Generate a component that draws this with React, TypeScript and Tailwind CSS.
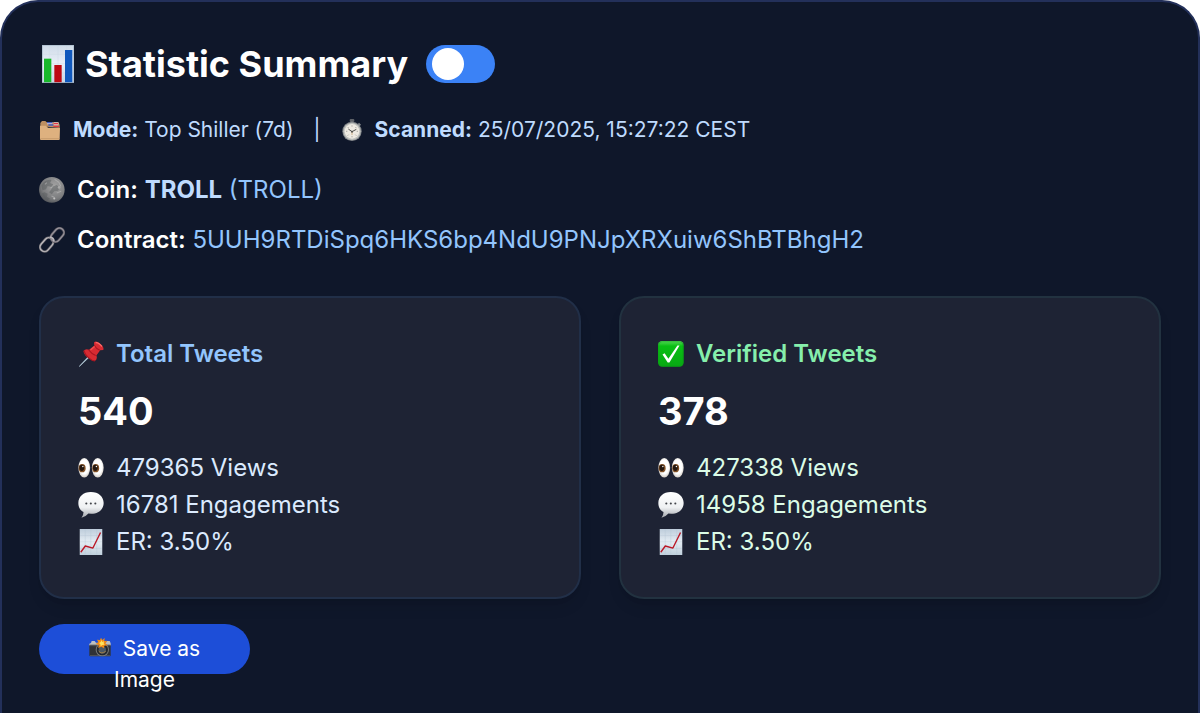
import { useState, type ReactNode } from 'react';

type IconProps = { className?: string };

function BarChartIcon({ className }: IconProps) {
	return (
		<svg viewBox="0 0 114 114" className={className} aria-hidden="true">
			<defs>
				<linearGradient id="bar-paper" x1="0" y1="0" x2="0" y2="1">
					<stop offset="0" stopColor="#cfdbe8" />
					<stop offset="0.5" stopColor="#e9eef8" />
					<stop offset="1" stopColor="#c9d6e4" />
				</linearGradient>
			</defs>
			<rect x="9" y="0" width="96" height="113" fill="url(#bar-paper)" />
			<path d="M31 1v111M57 1v111M83 1v111M10 28h94M10 56h94M10 84h94" stroke="#c5d3e2" strokeWidth="1" />
			<rect x="15" y="41" width="22" height="72" fill="#18b92b" />
			<rect x="46" y="60" width="22" height="53" fill="#bd0812" />
			<rect x="78" y="15" width="22" height="98" fill="#1058bd" />
			<rect x="10" y="1" width="94" height="111" fill="none" stroke="#a9bacb" strokeWidth="2" />
		</svg>
	);
}

function FolderIcon({ className }: IconProps) {
	return (
		<svg viewBox="0 0 66 66" className={className} aria-hidden="true">
			<path d="M4 22V12l5-6h10l4 4h36l3 8v8z" fill="#bd8f61" />
			<path d="M24 9h16v7H24zM44 10h14v9H44z" fill="#d9cdd0" />
			<path d="M24 11h16M28 18h15" stroke="#405bc1" strokeWidth="4" />
			<path d="M44 14h13M43 22h17" stroke="#e03845" strokeWidth="4" />
			<path d="M3 20h18l6 6h36l-1 35q0 2-3 2H6q-3 0-3-3z" fill="#deb17f" />
			<path d="M4 59h58" stroke="#bd9263" strokeWidth="2" />
		</svg>
	);
}

function StopwatchIcon({ className }: IconProps) {
	return (
		<svg viewBox="0 0 66 66" className={className} aria-hidden="true">
			<rect x="26" y="0" width="14" height="9" rx="3" fill="#5e6268" />
			<path d="M29 8h8v7h-8zM54 11l6 6-6 6-6-5z" fill="#85898d" />
			<circle cx="33" cy="37" r="29" fill="#85898c" />
			<circle cx="33" cy="37" r="26" fill="#bfc1be" />
			<circle cx="33" cy="37" r="22" fill="#eeeae2" />
			<path d="M33 19v4M33 51v4M15 37h4M47 37h4M20 24l3 3M43 47l3 3M46 24l-3 3M23 47l-3 3" stroke="#8b8b87" strokeWidth="2" />
			<path d="M22 30l11 8 13-7" fill="none" stroke="#51514e" strokeWidth="3" />
			<path d="M33 38v10" stroke="#c39760" strokeWidth="2" />
			<circle cx="33" cy="38" r="3" fill="#51514e" />
		</svg>
	);
}

function MoonIcon({ className }: IconProps) {
	return (
		<svg viewBox="0 0 75 75" className={className} aria-hidden="true">
			<defs>
				<radialGradient id="moon-face" cx="0.6" cy="0.35" r="0.7">
					<stop offset="0" stopColor="#a3a3a3" />
					<stop offset="0.7" stopColor="#7b7c7e" />
					<stop offset="1" stopColor="#525559" />
				</radialGradient>
			</defs>
			<circle cx="37" cy="37" r="37" fill="url(#moon-face)" />
			<path
				d="M7 25c6-13 18-19 29-16l-4 8 9 4-5 8-11-3-5 9-10 3zM39 28l12-5 9 7-5 10-11 1-7 9-8-6 6-7zM16 44l9 4-2 9 9 6-8 4c-9-5-14-13-15-20z"
				fill="#55585b"
				opacity="0.45"
			/>
			<path d="M45 7l12 8 6 12M33 32l6-4M51 46l13-5M36 55l9 4M17 21l6-5" fill="none" stroke="#b9b9b9" strokeWidth="3" opacity="0.6" />
			<circle cx="44" cy="62" r="3" fill="#c0c0c0" />
			<circle cx="58" cy="30" r="4" fill="#aaaaaa" />
		</svg>
	);
}

function LinkIcon({ className }: IconProps) {
	return (
		<svg viewBox="0 0 75 75" className={className} aria-hidden="true">
			<g fill="none">
				<rect x="-22" y="-13" width="44" height="26" rx="13" transform="translate(22 51) rotate(-49)" stroke="#747277" strokeWidth="7" />
				<rect x="-22" y="-13" width="44" height="26" rx="13" transform="translate(22 51) rotate(-49)" stroke="#c4c0c4" strokeWidth="3" />
				<rect x="-22" y="-13" width="44" height="26" rx="13" transform="translate(53 23) rotate(-49)" stroke="#625f66" strokeWidth="7" />
				<rect x="-22" y="-13" width="44" height="26" rx="13" transform="translate(53 23) rotate(-49)" stroke="#9b969f" strokeWidth="3" />
				<path d="M31 29q12 1 12 12" stroke="#bcb8bc" strokeWidth="5" />
			</g>
		</svg>
	);
}

function PinIcon({ className }: IconProps) {
	return (
		<svg viewBox="0 0 75 75" className={className} aria-hidden="true">
			<path d="M3 73l29-32 4 4L4 74z" fill="#8ba5b7" />
			<path d="M4 73l29-29" stroke="#d1dfe6" strokeWidth="2" />
			<path d="M16 29q5-8 16-4l15-12-1-9q6-6 17 3 13 10 10 19l-9 1-11 15q4 10-4 16-11-1-22-11-11-9-11-18z" fill="#d72b32" />
			<path d="M17 28q3 11 13 20 10 9 19 10M31 26q8 11 20 16M47 13q7 11 16 14" fill="none" stroke="#a61520" strokeWidth="3" />
			<path d="M51 5q7-2 18 11" fill="none" stroke="#fb6a68" strokeWidth="4" />
			<path d="M36 26l12-10" stroke="#ee5151" strokeWidth="4" />
		</svg>
	);
}

function CheckIcon({ className }: IconProps) {
	return (
		<svg viewBox="0 0 75 75" className={className} aria-hidden="true">
			<defs>
				<linearGradient id="check-fill" x1="0" y1="0" x2="0" y2="1">
					<stop offset="0" stopColor="#55d957" />
					<stop offset="0.2" stopColor="#09bf13" />
					<stop offset="1" stopColor="#08a813" />
				</linearGradient>
			</defs>
			<rect x="0" y="0" width="74" height="74" rx="12" fill="url(#check-fill)" />
			<rect x="2" y="2" width="70" height="70" rx="10" fill="none" stroke="#0a9918" strokeWidth="2" opacity="0.6" />
			<path d="M13 39l6-4 11 16 26-38h6L33 62h-5z" fill="#fff" />
		</svg>
	);
}

function EyesIcon({ className }: IconProps) {
	return (
		<svg viewBox="0 0 75 75" className={className} aria-hidden="true">
			<defs>
				<radialGradient id="eye-white" cx="0.5" cy="0.45" r="0.6">
					<stop offset="0.6" stopColor="#fff" />
					<stop offset="1" stopColor="#c6bdb3" />
				</radialGradient>
			</defs>
			<ellipse cx="18" cy="37" rx="17" ry="28" fill="url(#eye-white)" />
			<ellipse cx="57" cy="37" rx="17" ry="28" fill="url(#eye-white)" />
			<ellipse cx="12" cy="38" rx="10" ry="12" fill="#815025" />
			<ellipse cx="51" cy="38" rx="10" ry="12" fill="#815025" />
			<ellipse cx="11" cy="37" rx="7" ry="9" fill="#241710" />
			<ellipse cx="50" cy="37" rx="7" ry="9" fill="#241710" />
			<circle cx="14" cy="33" r="2" fill="#fff" />
			<circle cx="53" cy="33" r="2" fill="#fff" />
		</svg>
	);
}

function SpeechIcon({ className }: IconProps) {
	return (
		<svg viewBox="0 0 75 75" className={className} aria-hidden="true">
			<defs>
				<linearGradient id="speech-fill" x1="0" y1="0" x2="0" y2="1">
					<stop offset="0" stopColor="#fff" />
					<stop offset="0.6" stopColor="#eff1f3" />
					<stop offset="1" stopColor="#a5a8ad" />
				</linearGradient>
			</defs>
			<path d="M37 0C60 0 74 14 74 32S59 63 38 63l-8-1q-8 10-20 12 6-6 6-16C5 52 1 43 1 32 1 14 15 0 37 0z" fill="url(#speech-fill)" />
			<circle cx="24" cy="33" r="3" fill="#42454a" />
			<circle cx="37" cy="33" r="3" fill="#42454a" />
			<circle cx="50" cy="33" r="3" fill="#42454a" />
		</svg>
	);
}

function TrendIcon({ className }: IconProps) {
	return (
		<svg viewBox="0 0 75 75" className={className} aria-hidden="true">
			<defs>
				<linearGradient id="trend-paper" x1="0" y1="0" x2="0" y2="1">
					<stop offset="0" stopColor="#becddb" />
					<stop offset="0.5" stopColor="#e5edf4" />
					<stop offset="1" stopColor="#c0d0dc" />
				</linearGradient>
			</defs>
			<rect x="5" y="0" width="65" height="75" fill="url(#trend-paper)" />
			<path d="M21 1v73M37 1v73M54 1v73M6 19h63M6 37h63M6 56h63" stroke="#b4c5d4" strokeWidth="1" />
			<path d="M8 67l13-18 22 6L65 10" fill="none" stroke="#ba1927" strokeWidth="4" strokeLinejoin="round" />
		</svg>
	);
}

function CameraIcon({ className }: IconProps) {
	return (
		<svg viewBox="0 0 66 66" className={className} aria-hidden="true">
			<path d="M1 20l5-2 2-6h9l4 5h30l2-5h9l3 7v8H1z" fill="#bfc0bf" />
			<rect x="1" y="23" width="64" height="35" rx="3" fill="#303237" />
			<path d="M2 26h62M3 56h60" stroke="#6a6b6e" strokeWidth="2" />
			<circle cx="40" cy="38" r="20" fill="#77797a" />
			<circle cx="40" cy="38" r="17" fill="#24282e" />
			<circle cx="40" cy="39" r="11" fill="#4c5965" />
			<path d="M29 42q8 11 21 1" fill="none" stroke="#a77f44" strokeWidth="3" />
			<path d="M36 2l4 7 7-6-1 9 9-1-6 8 7 6-10 1-1 8-8-5-9 4 1-9-9-3 8-5-4-8 9 1z" fill="#f18b16" />
			<path d="M37 9l3 6 5-2-1 6 3 4-7 1-5 4-1-6-4-4 5-3z" fill="#ffe45d" />
		</svg>
	);
}

type StatCardProps = {
	icon: ReactNode;
	title: string;
	total: number;
	views: number;
	engagements: number;
	rate: string;
	borderClass: string;
	titleClass: string;
	textClass: string;
};

function StatCard({ icon, title, total, views, engagements, rate, borderClass, titleClass, textClass }: StatCardProps) {
	return (
		<section className={`rounded-[25px] border-2 bg-[#1e2334] p-[37px] shadow-lg ${borderClass}`}>
			<h2 className={`flex items-center gap-3 text-[24px] leading-[38px] font-semibold ${titleClass}`}>
				{icon}
				{title}
			</h2>
			<p className="my-4 text-[38px] leading-[44px] font-bold text-white">{total}</p>
			<ul className={`text-[24px] leading-[37px] ${textClass}`}>
				<li className="flex items-center gap-3">
					<EyesIcon className="size-[26px]" />
					{views} Views
				</li>
				<li className="flex items-center gap-3">
					<SpeechIcon className="size-[26px]" />
					{engagements} Engagements
				</li>
				<li className="flex items-center gap-3">
					<TrendIcon className="size-[26px]" />
					ER: {rate}
				</li>
			</ul>
		</section>
	);
}

export default function App() {
	const [enabled, setEnabled] = useState(false);

	return (
		<div className="bg-white font-['Inter',sans-serif]">
			<main className="min-h-screen rounded-t-[38px] border-x-2 border-t-2 border-[#23305a] bg-[#0f172a] px-[37px] pt-[42px] pb-4 text-white">
				<header className="flex items-center gap-[18px]">
					<h1 className="flex items-center gap-2 text-[36px] leading-[40px] font-bold">
						<BarChartIcon className="size-[38px]" />
						Statistic Summary
					</h1>
					<input
						type="checkbox"
						role="switch"
						aria-label="Toggle summary view"
						checked={enabled}
						onChange={(e) => setEnabled(e.target.checked)}
						className="flex h-[38px] w-[69px] cursor-pointer appearance-none items-center rounded-full bg-[#3b82f6] px-[6px] before:size-8 before:rounded-full before:bg-white checked:justify-end"
					/>
				</header>

				<div className="mt-[30px] flex flex-wrap items-center text-[21px] leading-[32px] text-[#bfdbfe]">
					<FolderIcon className="mr-3 size-[22px]" />
					<p>
						<strong className="font-bold">Mode:</strong> Top Shiller (7d)
					</p>
					<span className="mx-5">|</span>
					<StopwatchIcon className="mr-3 size-[22px]" />
					<p>
						<strong className="font-bold">Scanned:</strong> 25/07/2025, 15:27:22 CEST
					</p>
				</div>

				<div className="mt-[25px] space-y-3 text-[24px] leading-[38px]">
					<div className="flex items-center gap-3">
						<MoonIcon className="size-[26px]" />
						<p>
							<span className="font-semibold">Coin:</span> <strong className="font-bold text-[#bfdbfe]">TROLL</strong>{' '}
							<span className="text-[#93c5fd]">(TROLL)</span>
						</p>
					</div>
					<div className="flex items-center gap-3">
						<LinkIcon className="size-[26px]" />
						<p>
							<span className="font-semibold">Contract:</span>{' '}
							<span className="break-all text-[#93c5fd]">5UUH9RTDiSpq6HKS6bp4NdU9PNJpXRXuiw6ShBTBhgH2</span>
						</p>
					</div>
				</div>

				<div className="mt-[37px] grid grid-cols-2 gap-[38px]">
					<StatCard
						icon={<PinIcon className="size-[26px]" />}
						title="Total Tweets"
						total={540}
						views={479365}
						engagements={16781}
						rate="3.50%"
						borderClass="border-[#212f48]"
						titleClass="text-[#93c5fd]"
						textClass="text-[#dbeafe]"
					/>
					<StatCard
						icon={<CheckIcon className="size-[26px]" />}
						title="Verified Tweets"
						total={378}
						views={427338}
						engagements={14958}
						rate="3.50%"
						borderClass="border-[#223240]"
						titleClass="text-[#86efac]"
						textClass="text-[#dcfce7]"
					/>
				</div>

				<button
					type="button"
					className="mt-[25px] flex h-[50px] w-[211px] cursor-pointer items-start justify-center rounded-full bg-[#1d4ed8] px-10 pt-[9px] text-center text-[21px] leading-[31px] text-white"
				>
					<span>
						<CameraIcon className="mr-3 inline size-[22px] align-[-3px]" />
						Save as Image
					</span>
				</button>
			</main>
		</div>
	);
}
